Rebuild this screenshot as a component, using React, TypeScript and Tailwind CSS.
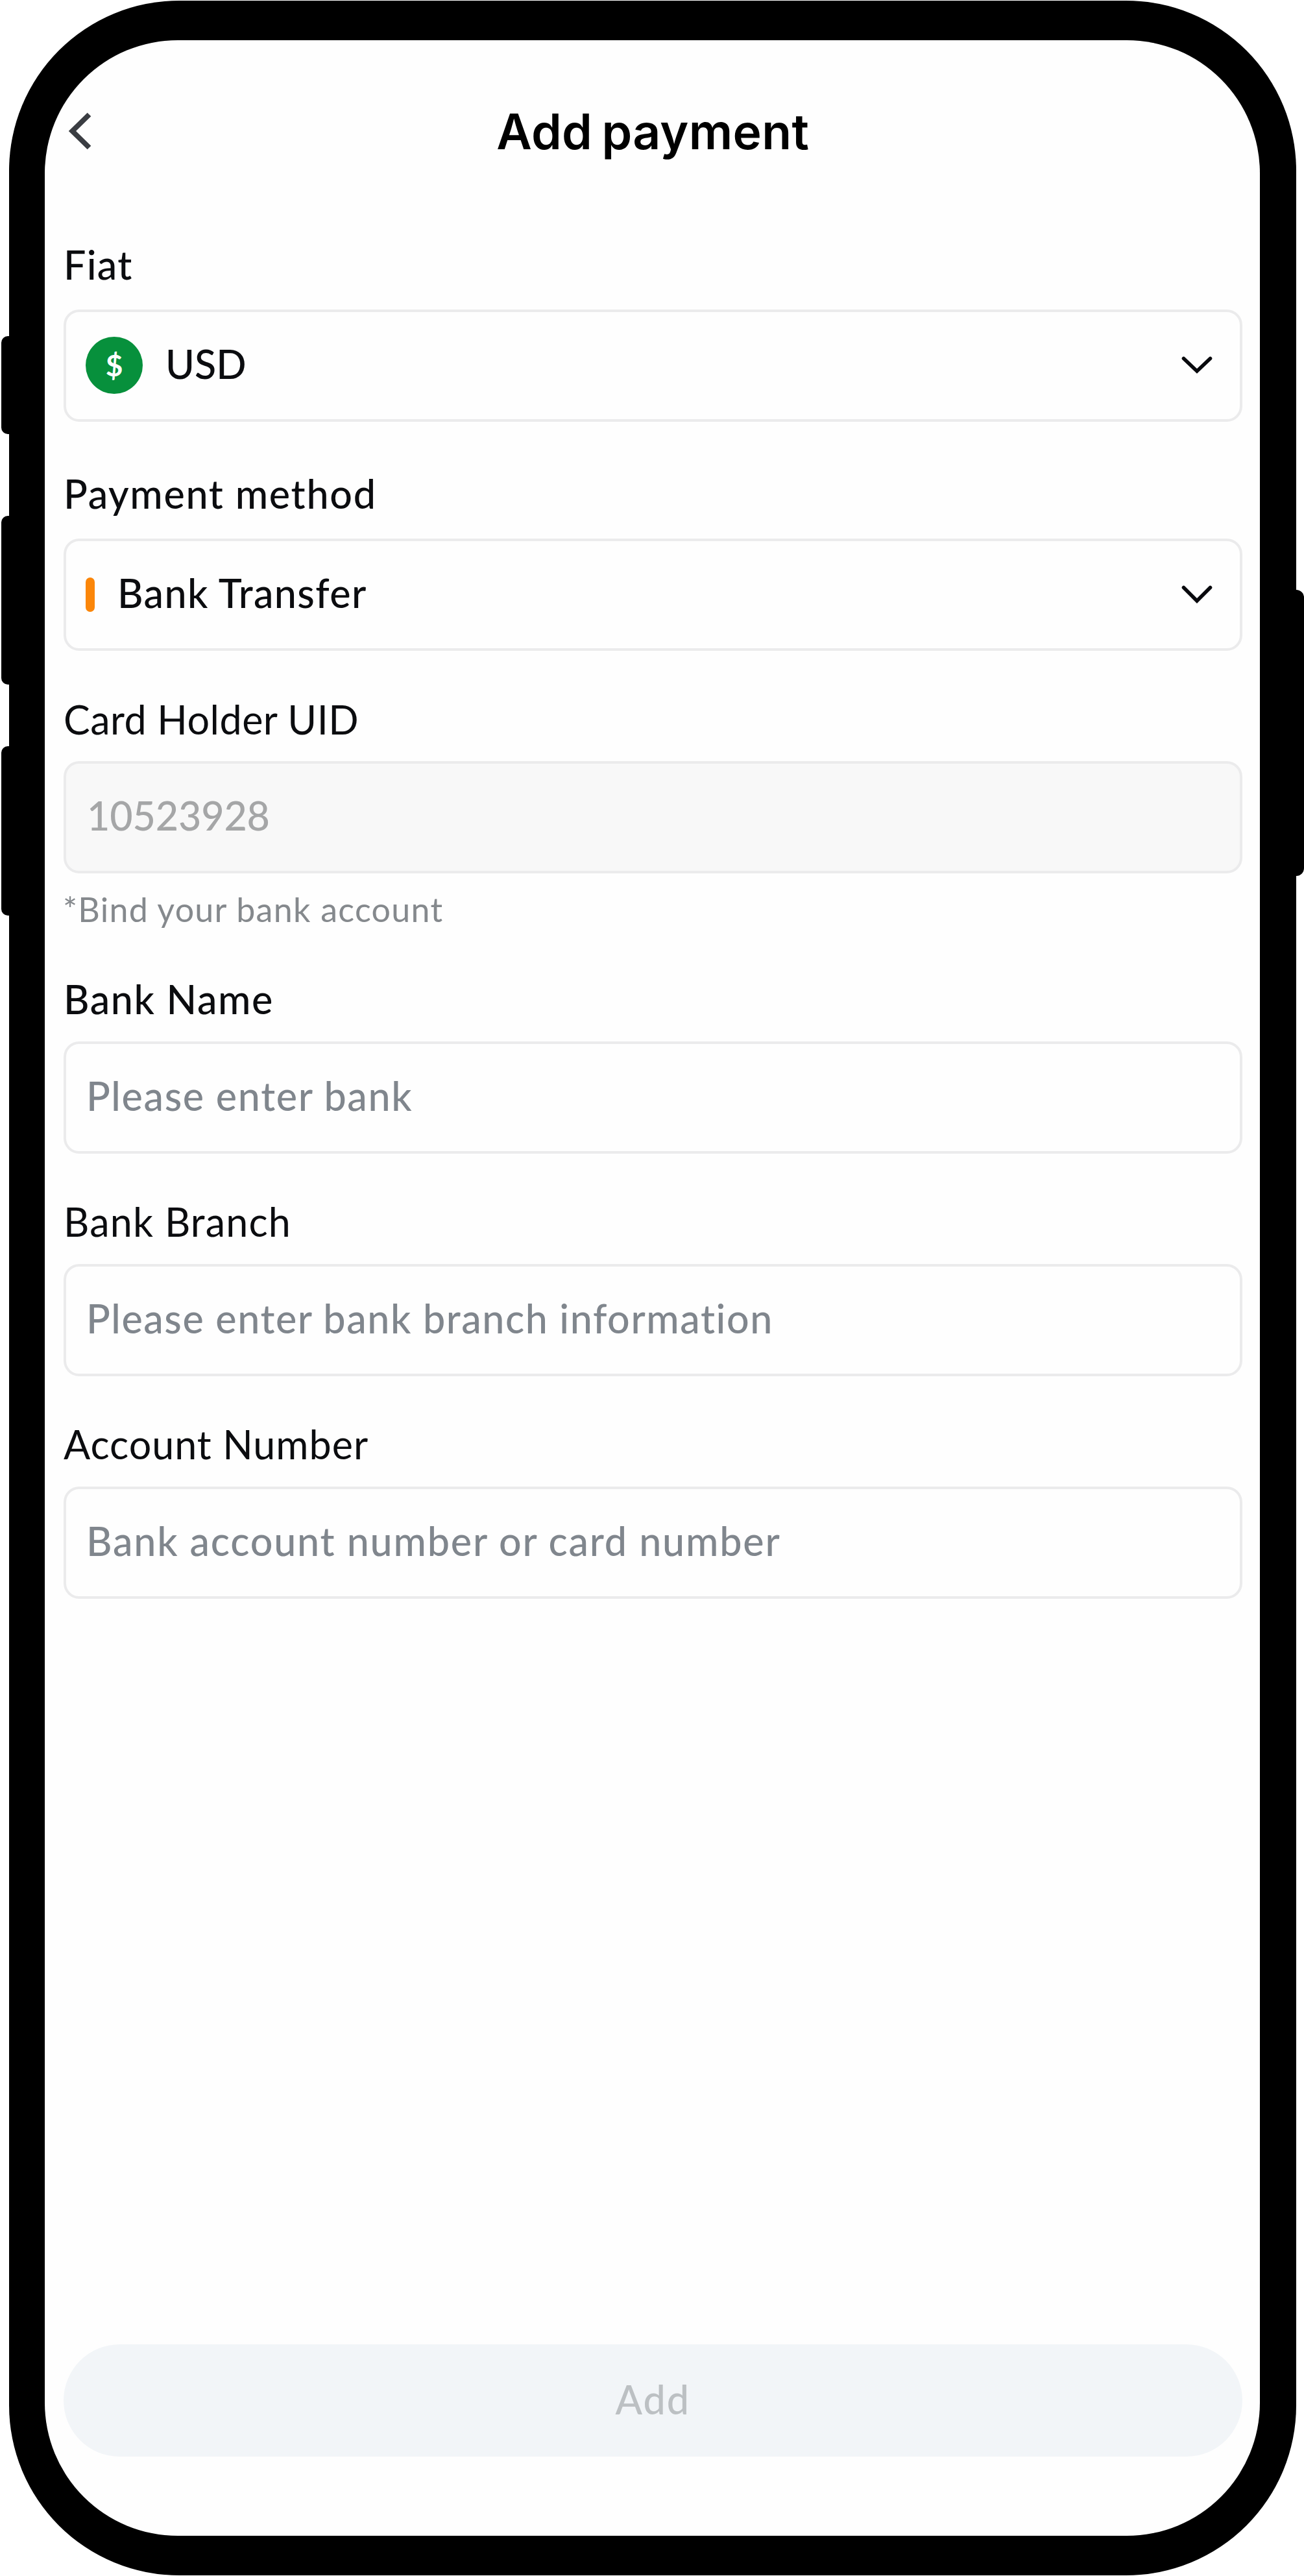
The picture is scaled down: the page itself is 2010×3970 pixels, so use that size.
import React from 'react';

function ChevronDown({ drop }: { drop: number }) {
  return (
    <svg width="50" height="36" viewBox="0 0 50 36" fill="none" className="shrink-0">
      <path
        d={`M4.5 7.5 L25 ${drop} L45.5 7.5`}
        stroke="#08090d"
        strokeWidth="5.6"
        strokeLinecap="round"
        strokeLinejoin="miter"
      />
    </svg>
  );
}

function Label({ children, className }: { children: React.ReactNode; className: string }) {
  return (
    <div className={`h-[72px] pt-[2px] text-[61px] leading-[72px] whitespace-nowrap text-[#0b0c0f] ${className}`}>
      {children}
    </div>
  );
}

function Box({ children, className = '' }: { children: React.ReactNode; className?: string }) {
  return (
    <div
      className={`flex h-[173px] items-center rounded-[24px] border-4 border-[#ebebec] pr-[41px] pl-[30px] ${className}`}
    >
      {children}
    </div>
  );
}

function Placeholder({ children, className }: { children: React.ReactNode; className: string }) {
  return (
    <span
      className={`pb-[4px] pl-px text-[61px] leading-[72px] font-medium whitespace-nowrap text-[#80868d] ${className}`}
    >
      {children}
    </span>
  );
}

export default function App() {
  return (
    <div className="relative h-[3970px] w-[2010px] overflow-hidden bg-white font-['Lato',sans-serif]">
      {/* Hardware buttons on the sides of the phone */}
      <div className="absolute top-[518px] left-[1.5px] h-[151px] w-[30px] rounded-[10px] bg-black" />
      <div className="absolute top-[795px] left-[1.5px] h-[260px] w-[30px] rounded-[10px] bg-black" />
      <div className="absolute top-[1150px] left-[1.5px] h-[261px] w-[30px] rounded-[10px] bg-black" />
      <div className="absolute top-[909px] right-0 h-[441px] w-[30px] rounded-[12px] bg-black" />

      <div className="relative mt-[1px] ml-[13.5px] flex h-[3967.5px] w-[1984px] rounded-[262px] bg-black pt-[60.5px] pr-[56px] pb-[60.5px] pl-[55.5px]">
        <div className="flex flex-1 flex-col rounded-[205px] bg-[#fefefe] pr-[27px] pl-[29px]">
          <header className="relative flex h-[278px] justify-center pt-[91px]">
            <svg width="44" height="66" viewBox="0 0 44 66" fill="none" className="absolute top-[107px] left-[3px]">
              <path d="M36.5 7.5 L10.5 33 L36.5 58.5" stroke="#3a3d42" strokeWidth="8" strokeLinejoin="miter" />
            </svg>
            <h1 className="h-[100px] font-['Inter',sans-serif] text-[75px] leading-[100px] font-semibold tracking-[0.3px] whitespace-nowrap text-black [word-spacing:-5px]">
              Add payment
            </h1>
          </header>

          <main className="flex flex-col pt-[30px]">
            <Label className="font-medium tracking-[1.3px]">Fiat</Label>
            <Box className="mt-[35px]">
              <span className="flex h-[88px] w-[88px] items-center justify-center rounded-full bg-[#07903c] text-[46px] leading-none font-bold text-white">
                $
              </span>
              <span className="ml-[35px] flex-1 pb-[4px] text-[61px] leading-[72px] font-medium text-[#0b0c0f]">USD</span>
              <ChevronDown drop={27} />
            </Box>

            <Label className="mt-[73px] font-medium tracking-[1.7px]">Payment method</Label>
            <Box className="mt-[35px]">
              <span className="h-[53px] w-[14px] rounded-full bg-[#fb8609]" />
              <span className="ml-[35px] flex-1 pb-[4px] text-[61px] leading-[72px] font-medium tracking-[1.4px] text-[#0b0c0f]">
                Bank Transfer
              </span>
              <ChevronDown drop={28} />
            </Box>

            <Label className="mt-[68px] tracking-[0.5px]">Card Holder UID</Label>
            <Box className="mt-[30px] bg-[#f8f8f8]">
              <span className="pb-[4px] pl-[2px] text-[61px] leading-[72px] font-medium tracking-[-0.15px] text-[#a5a6a7]">
                10523928
              </span>
            </Box>
            <div className="-ml-px mt-[24px] h-[62px] text-[52px] leading-[62px] tracking-[1.25px] text-[#85898d]">
              *Bind your bank account
            </div>

            <Label className="mt-[70px] font-medium tracking-[1.6px]">Bank Name</Label>
            <Box className="mt-[31px]">
              <Placeholder className="tracking-[1.65px]">Please enter bank</Placeholder>
            </Box>

            <Label className="mt-[67px] tracking-[1.2px]">Bank Branch</Label>
            <Box className="mt-[31px]">
              <Placeholder className="tracking-[1.57px]">Please enter bank branch information</Placeholder>
            </Box>

            <Label className="mt-[67px] tracking-[1px]">Account Number</Label>
            <Box className="mt-[31px]">
              <Placeholder className="tracking-[1.8px]">Bank account number or card number</Placeholder>
            </Box>
          </main>

          <button className="mt-auto mb-[122.5px] flex h-[173px] items-center justify-center rounded-full bg-[#f2f5f8] pb-[3px] text-[61px] leading-[72px] font-medium tracking-[2px] text-[#bcc0c3]">
            Add
          </button>
        </div>
      </div>
    </div>
  );
}
